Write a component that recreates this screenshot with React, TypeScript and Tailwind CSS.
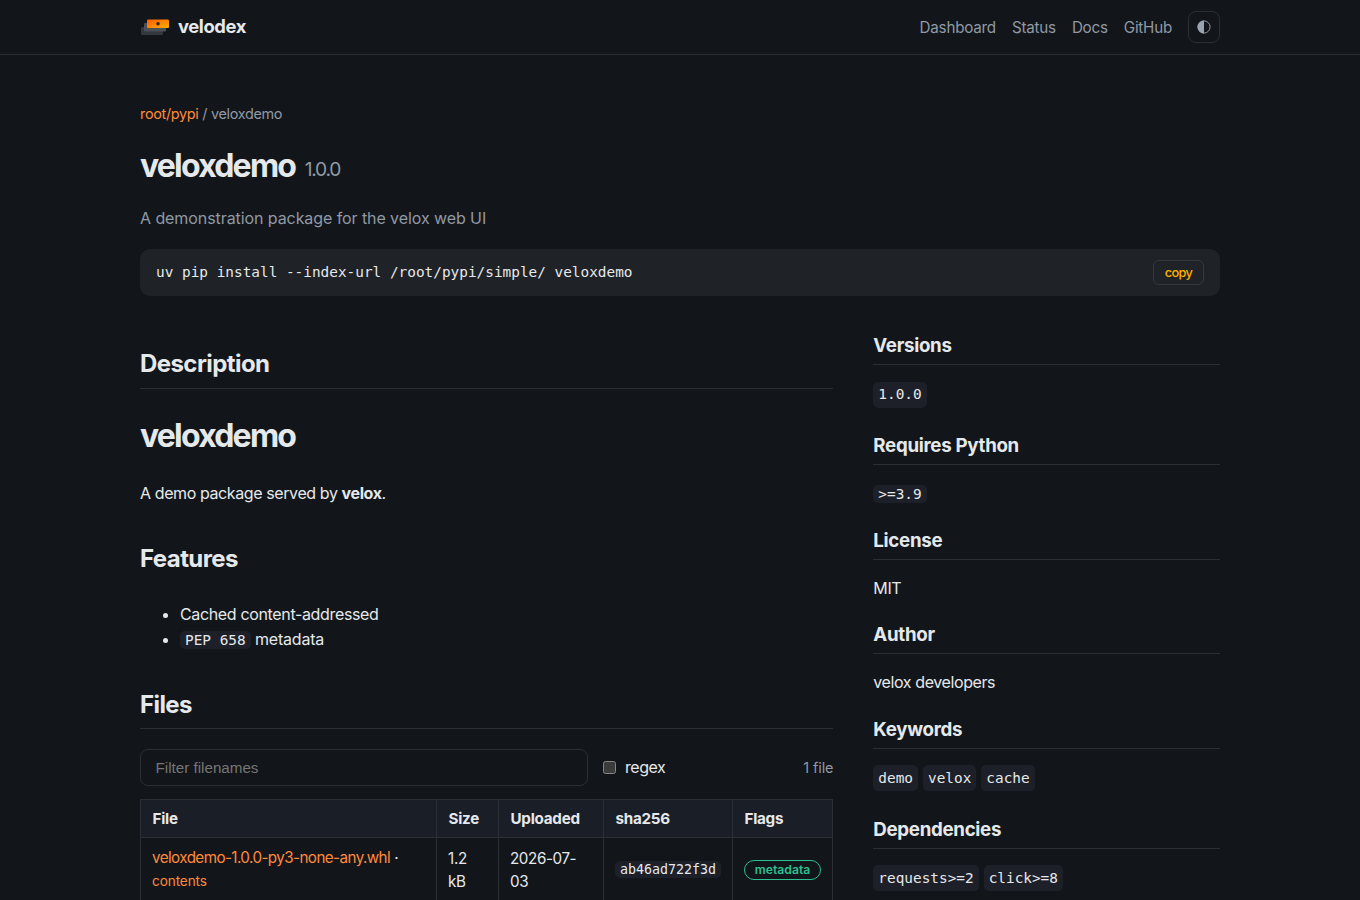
import type { ReactNode } from "react";

type Meta = {
  title: string;
  height: string;
  chips?: string[];
  chipGap?: string;
  code?: string;
  text?: string;
};

const links = ["Dashboard", "Status", "Docs", "GitHub"];

const meta: Meta[] = [
  { title: "Versions", height: "h-[100px]", chips: ["1.0.0"], chipGap: "mt-[17px] leading-[25px]" },
  { title: "Requires Python", height: "h-[95px]", code: ">=3.9" },
  { title: "License", height: "h-[94px]", text: "MIT" },
  { title: "Author", height: "h-[95px]", text: "velox developers" },
  { title: "Keywords", height: "h-[100px]", chips: ["demo", "velox", "cache"], chipGap: "mt-4 leading-[26px]" },
  { title: "Dependencies", height: "h-[100px]", chips: ["requests>=2", "click>=8"], chipGap: "mt-4 leading-[26px]" },
];

const mono = "font-['DejaVu_Sans_Mono',monospace]";

export default function App() {
  return (
    <div className="h-[900px] overflow-hidden bg-[#12161a] font-[Inter,sans-serif] text-base text-[#e6e9ec]">
      <Header />
      <main className="mx-auto w-[1080px] pt-[47px]">
        <div className="h-6 text-[14.4px] leading-6 tracking-[-0.3px] text-[#9099a5]">
          <a className="text-[#ff8a3d]">root/pypi</a> / veloxdemo
        </div>
        <h1 className="mt-[21px] h-[38px] text-[32px] leading-[38px] font-bold tracking-[-1.8px]">
          veloxdemo
          <span className="ml-[9.5px] align-[1px] text-[19.2px] font-normal tracking-[-1.2px] text-[#9099a5]">
            1.0.0
          </span>
        </h1>
        <p className="mt-5 h-[26px] leading-[26px] tracking-[-0.08px] text-[#9099a5]">
          A demonstration package for the velox web UI
        </p>
        <div className="mt-[18px] flex h-[47px] items-center justify-between rounded-[10px] bg-[#1f2226] px-4">
          <code className={`${mono} text-[14.4px]`}>
            uv pip install --index-url /root/pypi/simple/ veloxdemo
          </code>
          <button className="h-[25px] w-[51px] rounded-md border border-[#343941] text-[12.8px] font-medium tracking-[-0.6px] text-[#ffb000]">
            copy
          </button>
        </div>

        <div className="grid grid-cols-[2fr_1fr] gap-10">
          <div className="min-w-0">
            <h2 className="mt-[49px] h-11 border-b border-[#2a2e35] text-2xl leading-[38px] font-bold tracking-[-0.57px]">
              Description
            </h2>
            <h1 className="mt-7 text-[32px] leading-[38px] font-bold tracking-[-1.8px]">veloxdemo</h1>
            <p className="mt-[25px] leading-[26px] tracking-[-0.4px]">
              A demo package served by <strong>velox</strong>.
            </p>
            <h2 className="mt-[34px] text-2xl leading-[38px] font-bold tracking-[-0.57px]">Features</h2>
            <ul className="mt-6 list-disc pl-10 leading-[25px] tracking-[-0.2px]">
              <li className="tracking-[-0.35px]">Cached content-addressed</li>
              <li>
                <Code>PEP 658</Code> metadata
              </li>
            </ul>
            <h2 className="mt-[33px] h-[43px] border-b border-[#2a2e35] text-2xl leading-[38px] font-bold tracking-[-0.6px]">
              Files
            </h2>
            <Files />
          </div>

          <aside className="pt-[33px]">
            {meta.map((item) => (
              <MetaBlock key={item.title} item={item} />
            ))}
          </aside>
        </div>
      </main>
    </div>
  );
}

function Header() {
  return (
    <header className="h-[55px] border-b border-[#2a2e35]">
      <div className="mx-auto flex h-[54px] w-[1080px] items-center justify-between">
        <div className="flex items-center gap-2">
          <Logo />
          <span className="text-[18.4px] font-bold tracking-[-0.4px]">velodex</span>
        </div>
        <nav className="flex items-center gap-4 text-[15.2px] tracking-[-0.22px] text-[#9099a5]">
          {links.map((link) => (
            <a key={link} className="pt-0.5">
              {link}
            </a>
          ))}
          <button className="flex size-8 items-center justify-center rounded-lg border border-[#2a2e35]">
            <svg width="14" height="14" viewBox="0 0 14 14">
              <circle cx="7" cy="7" r="6.1" fill="none" stroke="#9aa3b0" strokeWidth="0.9" />
              <path d="M7 0.5a6.5 6.5 0 0 0 0 13z" fill="#9aa3b0" />
            </svg>
          </button>
        </nav>
      </div>
    </header>
  );
}

function Logo() {
  return (
    <svg width="30" height="20" viewBox="0 0 30 20">
      <defs>
        <linearGradient id="wheel" x1="0" y1="0" x2="1" y2="1">
          <stop offset="0" stopColor="#ff5a00" />
          <stop offset="1" stopColor="#ffb000" />
        </linearGradient>
      </defs>
      <rect x="1" y="10" width="22" height="8" rx="1.2" fill="#33373e" />
      <rect x="4" y="6" width="22" height="8.5" rx="1.2" fill="#4b4f58" />
      <rect x="7" y="2.5" width="22" height="8.5" rx="1.2" fill="url(#wheel)" />
      <circle cx="18" cy="6.8" r="1.8" fill="#33241a" />
    </svg>
  );
}

function Code({ children }: { children: ReactNode }) {
  return (
    <code className={`${mono} rounded-[5px] bg-[#1d2029] px-[5px] py-[1px] text-[14.4px] tracking-normal`}>
      {children}
    </code>
  );
}

function MetaBlock({ item }: { item: Meta }) {
  return (
    <section className={item.height}>
      <h3 className="h-9 border-b border-[#2a2e35] text-[18.7px] leading-[33px] font-bold tracking-[-0.3px]">
        {item.title}
      </h3>
      {item.chips && (
        <div className={`${item.chipGap} flex gap-[5px]`}>
          {item.chips.map((chip) => (
            <code key={chip} className={`${mono} h-[26px] rounded-[5px] bg-[#1d2029] px-[5px] text-[14.4px]`}>
              {chip}
            </code>
          ))}
        </div>
      )}
      {item.code && (
        <p className="mt-[15px] leading-[26px]">
          <Code>{item.code}</Code>
        </p>
      )}
      {item.text && <p className="mt-[15px] leading-[26px] tracking-[-0.4px]">{item.text}</p>}
    </section>
  );
}

function Files() {
  const th = "border border-[#2a2e35] px-[11.5px] text-left font-bold";
  const td = "border border-[#2a2e35] px-[11px] py-2";

  return (
    <>
      <div className="mt-5 flex h-[37px] items-center">
        <input
          placeholder="Filter filenames"
          className="h-[37px] w-[448px] rounded-lg border border-[#2a2e35] px-[14.5px] font-['Liberation_Sans',sans-serif] text-[15.2px] placeholder:text-[#757575]"
        />
        <span className="ml-[15px] size-[13px] rounded-[2.5px] border border-[#858585] bg-[#3b3b3b]" />
        <span className="ml-[9px] pb-0.5 tracking-[-0.45px]">regex</span>
        <span className="ml-auto text-[14.4px] tracking-[-0.1px] text-[#9099a5]">1 file</span>
      </div>
      <table className="mt-[13px] w-[693px] table-fixed border-collapse text-[15.2px] leading-[23px] tracking-[-0.25px]">
        <colgroup>
          <col className="w-[296px]" />
          <col className="w-[62px]" />
          <col className="w-[105px]" />
          <col className="w-[129px]" />
          <col className="w-[100px]" />
        </colgroup>
        <thead>
          <tr className="h-[38px] bg-[#1a1e26]">
            <th className={th}>File</th>
            <th className={th}>Size</th>
            <th className={th}>Uploaded</th>
            <th className={th}>sha256</th>
            <th className={th}>Flags</th>
          </tr>
        </thead>
        <tbody>
          <tr>
            <td className={td}>
              <a className="tracking-[-0.57px] text-[#ff8a3d]">veloxdemo-1.0.0-py3-none-any.whl</a> ·
              <br />
              <a className="text-[13.6px] tracking-[-0.1px] text-[#ff8a3d]">contents</a>
            </td>
            <td className={td}>1.2 kB</td>
            <td className={`${td} tracking-[-0.4px]`}>2026-07-03</td>
            <td className={`${td} pb-[10px]`}>
              <code className={`${mono} rounded-[5px] bg-[#1d2029] px-[5px] py-[1px] text-[13.3px] tracking-normal`}>
                ab46ad722f3d
              </code>
            </td>
            <td className={td}>
              <span className="flex h-5 w-[77px] items-center justify-center rounded-full border border-[#2dbf8f] text-[12.2px] font-semibold tracking-normal text-[#2dbf8f]">
                metadata
              </span>
            </td>
          </tr>
        </tbody>
      </table>
    </>
  );
}
